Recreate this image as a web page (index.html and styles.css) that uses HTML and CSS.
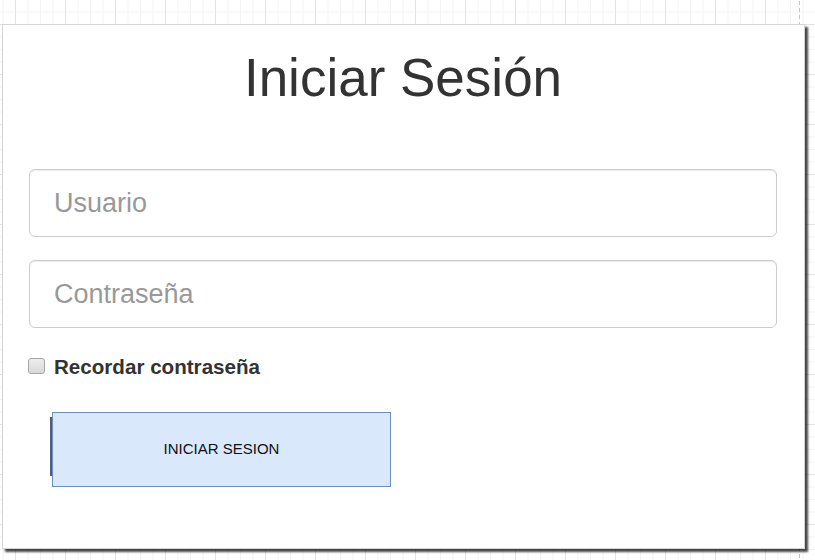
FILE: index.html
```html
<!DOCTYPE html>
<html lang="es">
<head>
<meta charset="utf-8">
<title>Iniciar Sesión</title>
<link rel="stylesheet" href="styles.css">
</head>
<body>
  <div class="card">
    <h1 class="title">Iniciar Sesión</h1>
    <form class="form">
      <input class="field" type="text" placeholder="Usuario">
      <input class="field" type="password" placeholder="Contraseña">
      <label class="remember">
        <input class="check" type="checkbox">
        <span>Recordar contraseña</span>
      </label>
      <button class="submit" type="button">INICIAR SESION</button>
    </form>
  </div>
</body>
</html>
```

FILE: styles.css
```css
html, body {
  margin: 0;
  padding: 0;
}

body {
  min-height: 560px;
  background-color: #ffffff;
  background-image:
    linear-gradient(to bottom, #c4c4c4 0, #c4c4c4 4px, transparent 4px, transparent 7px),
    linear-gradient(to right, #e3e3e3 1px, transparent 1px),
    linear-gradient(to bottom, #e3e3e3 1px, transparent 1px),
    linear-gradient(to right, #f3f3f3 1px, transparent 1px),
    linear-gradient(to bottom, #f3f3f3 1px, transparent 1px);
  background-size: 1px 7px, 50px 50px, 50px 50px, 12.5px 12.5px, 12.5px 12.5px;
  background-position: 799px 1px, 15px 24px, 15px 24px, 15px 24px, 15px 24px;
  background-repeat: repeat-y, repeat, repeat, repeat, repeat;
  font-family: "Liberation Sans", Arial, sans-serif;
  color: #333333;
  overflow: hidden;
}

.card {
  box-sizing: border-box;
  width: 803px;
  height: 525px;
  margin: 24px 0 0 2px;
  padding: 23px 27px 0 26px;
  background: #ffffff;
  border: 1px solid #d4d4d4;
  box-shadow: 3px 3px 2px rgba(0, 0, 0, 0.72);
}

.title {
  margin: 0;
  font-size: 53px;
  line-height: 60px;
  font-weight: normal;
  text-align: center;
  color: #333333;
}

.form {
  display: flex;
  flex-direction: column;
  margin-top: 61px;
}

.field {
  box-sizing: border-box;
  display: block;
  width: 100%;
  height: 68px;
  margin: 0;
  padding: 0 24px;
  font-family: "Liberation Sans", Arial, sans-serif;
  font-size: 27px;
  color: #555555;
  background: #ffffff;
  border: 1px solid #cccccc;
  border-radius: 6px;
  box-shadow: inset 0 1px 1px rgba(0, 0, 0, 0.075);
  outline: none;
}

.field + .field {
  margin-top: 23px;
}

.field::placeholder {
  color: #999999;
  opacity: 1;
}

.remember {
  display: flex;
  align-items: center;
  gap: 9px;
  margin-top: 27px;
  margin-left: -1px;
  font-size: 20.6px;
  line-height: 24px;
  font-weight: bold;
  color: #333333;
}

.check {
  appearance: none;
  -webkit-appearance: none;
  box-sizing: border-box;
  width: 17px;
  height: 16px;
  margin: 0;
  border: 1px solid #a6a6a6;
  border-radius: 3px;
  background: linear-gradient(to bottom, #ededed, #d9d9d9);
  position: relative;
  top: -1px;
}

.submit {
  box-sizing: border-box;
  align-self: flex-start;
  width: 339px;
  height: 75px;
  margin: 33px 0 0 23px;
  padding: 0 0 2px 0;
  font-family: "Liberation Sans", Arial, sans-serif;
  font-size: 15px;
  color: #111111;
  background: #dae8fc;
  border: 1px solid #6c8ebf;
  border-radius: 0;
  box-shadow: -10px -3px 0 -8px #4e5f7d;
  cursor: pointer;
}
```
